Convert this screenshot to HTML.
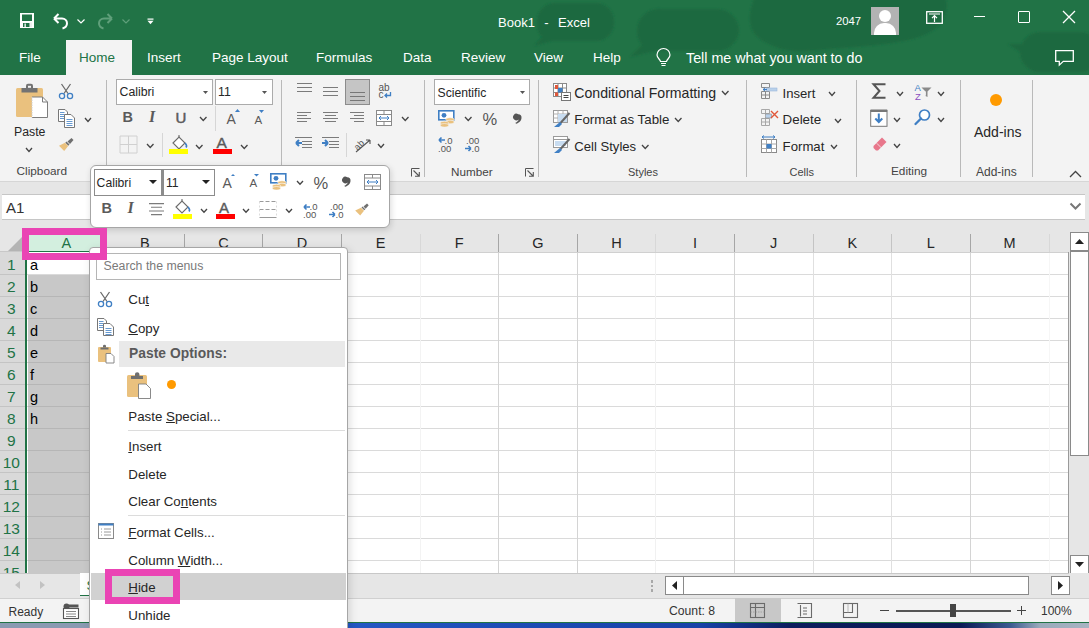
<!DOCTYPE html>
<html><head><meta charset="utf-8">
<style>
*{box-sizing:border-box;margin:0;padding:0}
html,body{width:1089px;height:628px;overflow:hidden;background:#e6e6e6;font-family:"Liberation Sans",sans-serif;color:#262626}
.a{position:absolute}
svg.a{overflow:visible}
.t{position:absolute;white-space:nowrap;line-height:1}
#title{left:0;top:0;width:1089px;height:75px;background:#217346;overflow:hidden}
.tab{position:absolute;top:51px;font-size:13.5px;color:#fff}
</style></head><body>
<!-- TITLE BAR + TABS -->
<div id="title" class="a">
 <svg class="a" style="left:0;top:0" width="1089" height="75" viewBox="0 0 1089 75"><g fill="#1f6940" filter="url(#bl)">
 <path d="M556 3h40a18 18 0 0 1 18 18v2a18 18 0 0 1-18 18h-44l-18 5l8-9a18 18 0 0 1-5-14v-2a18 18 0 0 1 19-18z"/>
 <path d="M662 9h55a22 22 0 0 1 22 22a22 22 0 0 1-22 20h-62l-25 6l12-12a22 22 0 0 1-5-14a22 22 0 0 1 25-22z"/>
 <path d="M755 -5h185c10 0 8 20 0 30c-20 20-70 20-120 25c-30 3-40 0-55-8c-15-8-20-20-10-47z"/>
 <path d="M1040 32h40a20 20 0 0 1 20 20a20 20 0 0 1-20 20h-40a20 20 0 0 1-20-20l-12-8l14 0a20 20 0 0 1 18-12z"/>
</g><defs><filter id="bl"><feGaussianBlur stdDeviation="1.2"/></filter></defs></svg>
 <!-- save -->
 <svg class="a" style="left:20px;top:13px" width="14" height="15" viewBox="0 0 14 15"><rect width="14" height="15" fill="#fff"/><rect x="2" y="1.5" width="10" height="6.5" fill="#217346"/><rect x="3" y="10" width="6.5" height="4" fill="#217346"/><rect x="4.5" y="10.5" width="1.3" height="3.5" fill="#fff"/><rect x="10" y="9.5" width="2" height="4.5" fill="#eee"/></svg>
 <!-- undo -->
 <svg class="a" style="left:52px;top:12px" width="18" height="18" viewBox="0 0 18 18"><path d="M2 6.5l4.5-4.5M2 6.5l4.5 4.5M2.5 6.5h7.5c3 0 5 2.2 5 4.8c0 2.6-1.8 4.5-4.5 5.2" fill="none" stroke="#fff" stroke-width="2"/></svg>
 <svg class="a" style="left:77px;top:19px" width="8" height="5" viewBox="0 0 8 5"><path d="M.5.5l3.5 3.5l3.5-3.5" fill="none" stroke="#fff" stroke-width="1.2"/></svg>
 <!-- redo -->
 <svg class="a" style="left:96px;top:12px" width="18" height="18" viewBox="0 0 18 18"><path d="M16 6.5l-4.5-4.5M16 6.5l-4.5 4.5M15.5 6.5h-7.5c-3 0-5 2.2-5 4.8c0 2.6 1.8 4.5 4.5 5.2" fill="none" stroke="#5f9f7a" stroke-width="2"/></svg>
 <svg class="a" style="left:122px;top:19px" width="8" height="5" viewBox="0 0 8 5"><path d="M.5.5l3.5 3.5l3.5-3.5" fill="none" stroke="#5f9f7a" stroke-width="1.2"/></svg>
 <!-- customize -->
 <svg class="a" style="left:147px;top:18px" width="7" height="7" viewBox="0 0 7 7"><rect x="0.5" y="0.5" width="6" height="1.2" fill="#fff"/><path d="M0.5 2.8h6l-3 3.5z" fill="#fff"/></svg>
 <div class="t" style="left:498px;top:15.5px;font-size:13px;color:#fff;word-spacing:1.1px">Book1&nbsp; -&nbsp; Excel</div>
 <div class="t" style="left:836px;top:16px;font-size:11.3px;color:#fff">2047</div>
 <div class="a" style="left:871px;top:7px;width:28px;height:28px;background:#b3b3b3;overflow:hidden">
  <div class="a" style="left:8px;top:3px;width:12px;height:12px;border-radius:50%;background:#fff"></div>
  <div class="a" style="left:3px;top:16px;width:22px;height:16px;border-radius:10px 10px 0 0;background:#fff"></div>
 </div>
 <svg class="a" style="left:926px;top:11px" width="17" height="13" viewBox="0 0 17 13"><rect x="0.7" y="0.7" width="15.6" height="11.6" fill="none" stroke="#fff" stroke-width="1.3"/><path d="M3 3h11M8.5 11V5M6 7.2l2.5-2.5l2.5 2.5" fill="none" stroke="#fff" stroke-width="1.2"/></svg>
 <div class="a" style="left:974px;top:16px;width:11px;height:1.3px;background:#fff"></div>
 <div class="a" style="left:1018px;top:11px;width:12px;height:12px;border:1.3px solid #fff;border-radius:1px"></div>
 <svg class="a" style="left:1062px;top:10px" width="14" height="14" viewBox="0 0 14 14"><path d="M1 1l12 12M13 1l-12 12" stroke="#fff" stroke-width="1.3"/></svg>
 <!-- tabs -->
 <div class="a" style="left:66px;top:40px;width:66px;height:35px;background:#f3f3f3"></div>
 <div class="tab t" style="left:19px">File</div>
 <div class="tab t" style="left:79px;color:#217346">Home</div>
 <div class="tab t" style="left:147px">Insert</div>
 <div class="tab t" style="left:212px">Page Layout</div>
 <div class="tab t" style="left:316px">Formulas</div>
 <div class="tab t" style="left:403px">Data</div>
 <div class="tab t" style="left:461px">Review</div>
 <div class="tab t" style="left:534px">View</div>
 <div class="tab t" style="left:593px">Help</div>
 <svg class="a" style="left:656px;top:49px" width="15" height="19" viewBox="0 0 15 19"><path d="M4.5 12.5c-.3-2-3.5-3.6-3.5-6.5a6.5 6.5 0 0 1 13 0c0 2.9-3.2 4.5-3.5 6.5z" fill="none" stroke="#fff" stroke-width="1.2"/><path d="M5 14.5h5M5.5 16.5h4" stroke="#fff" stroke-width="1.2"/></svg>
 <div class="tab t" style="left:686px;font-size:14.3px">Tell me what you want to do</div>
 <svg class="a" style="left:1055px;top:50px" width="19" height="16" viewBox="0 0 19 16"><path d="M.7.7h17.6v10.6h-10l-4 3.8v-3.8h-3.6z" fill="none" stroke="#fff" stroke-width="1.3"/></svg>
</div>

<div class="a" style="left:0px;top:75px;width:1089px;height:107px;background:#f3f3f3"></div><div class="a" style="left:0px;top:181px;width:1089px;height:1.2px;background:#d6d6d6"></div><div class="a" style="left:106px;top:80px;width:1px;height:97px;background:#b9b9b9"></div><div class="a" style="left:281px;top:80px;width:1px;height:97px;background:#b9b9b9"></div><div class="a" style="left:424px;top:80px;width:1px;height:97px;background:#b9b9b9"></div><div class="a" style="left:538px;top:80px;width:1px;height:97px;background:#b9b9b9"></div><div class="a" style="left:746px;top:80px;width:1px;height:97px;background:#b9b9b9"></div><div class="a" style="left:856px;top:80px;width:1px;height:97px;background:#b9b9b9"></div><div class="a" style="left:960px;top:80px;width:1px;height:97px;background:#b9b9b9"></div><div class="a" style="left:1032px;top:80px;width:1px;height:97px;background:#b9b9b9"></div><div class="a" style="left:215px;top:106px;width:1px;height:25px;background:#d6d6d6"></div><div class="a" style="left:162px;top:133px;width:1px;height:24px;background:#d6d6d6"></div><div class="a" style="left:346px;top:133px;width:1px;height:24px;background:#d6d6d6"></div><div class="t" style="left:16.5px;top:166.3px;font-size:11.8px;color:#444;">Clipboard</div><div class="t" style="left:451.0px;top:166.4px;font-size:11.7px;color:#444;">Number</div><div class="t" style="left:628.0px;top:167.0px;font-size:11px;color:#444;">Styles</div><div class="t" style="left:789.5px;top:167.0px;font-size:11px;color:#444;">Cells</div><div class="t" style="left:891.0px;top:166.3px;font-size:11.8px;color:#444;">Editing</div><div class="t" style="left:976.0px;top:166.1px;font-size:12px;color:#444;">Add-ins</div><svg class="a" style="left:411px;top:168px" width="9" height="9" viewBox="0 0 9 9"><path d="M.5 8.5v-8h8" fill="none" stroke="#555" stroke-width="1"/><path d="M2.5 2.5l5.5 5.5M4 8.3h4.3v-4.3" fill="none" stroke="#555" stroke-width="1.1"/></svg><svg class="a" style="left:525px;top:168px" width="9" height="9" viewBox="0 0 9 9"><path d="M.5 8.5v-8h8" fill="none" stroke="#555" stroke-width="1"/><path d="M2.5 2.5l5.5 5.5M4 8.3h4.3v-4.3" fill="none" stroke="#555" stroke-width="1.1"/></svg><svg class="a" style="left:1069px;top:170px" width="13" height="8" viewBox="0 0 13 8"><path d="M1 7l5.5-5.5l5.5 5.5" fill="none" stroke="#444" stroke-width="1.3"/></svg><svg class="a" style="left:14px;top:83px" width="36" height="37" viewBox="0 0 36 37"><rect x="2" y="5" width="27" height="29" rx="1.5" fill="#eac17e"/>
<path d="M7.5 5h16v4.5h-16z" fill="#737373"/><path d="M12 6v-3.2a2 2 0 0 1 2-2h3a2 2 0 0 1 2 2v3.2z" fill="#737373"/><rect x="14" y="2.8" width="3" height="2" fill="#f3f3f3"/>
<path d="M18 14h10.5l5 5v15.5h-15.5z" fill="#fff"/><path d="M18 14h10.5l5 5v15.5h-15.5" fill="none" stroke="#7d7d7d" stroke-width="1"/><path d="M18 14v20.5" stroke="#cfcfcf" stroke-width="1" stroke-dasharray="1.5 1"/><path d="M28.5 14v5h5" fill="none" stroke="#7d7d7d" stroke-width="1"/></svg><div class="t" style="left:14.0px;top:125.5px;font-size:12.3px;color:#262626;">Paste</div><svg class="a" style="left:25px;top:147px" width="8" height="5.5" viewBox="0 0 8 5.5"><path d="M1 1l3.0 3.5l3.0 -3.5" fill="none" stroke="#444" stroke-width="1.3"/></svg><svg class="a" style="left:58px;top:83px" width="16" height="17" viewBox="0 0 16 17"><path d="M3.5 1l6.5 9.5M12.5 1l-6.5 9.5" stroke="#6b6b6b" stroke-width="1.3"/><circle cx="4" cy="13" r="2.6" fill="none" stroke="#3f7fc4" stroke-width="1.3"/><circle cx="12" cy="13" r="2.6" fill="none" stroke="#3f7fc4" stroke-width="1.3"/></svg><svg class="a" style="left:58px;top:109px" width="17" height="19" viewBox="0 0 17 19"><path d="M.5 .5h6.5l2.5 2.5v9.5h-9z" fill="#fff" stroke="#777" stroke-width="1"/>
<path d="M2 3.5h4.5M2 5.5h4.5M2 7.5h4.5M2 9.5h4.5" stroke="#3f7fc4" stroke-width=".8"/>
<path d="M6.5 5.5h6.5l3.5 3.5v9.5h-10z" fill="#fff" stroke="#777" stroke-width="1"/>
<path d="M8.5 10.5h6M8.5 12.5h6M8.5 14.5h6M8.5 16.5h6" stroke="#3f7fc4" stroke-width=".8"/></svg><svg class="a" style="left:83.5px;top:116.5px" width="8" height="5.5" viewBox="0 0 8 5.5"><path d="M1 1l3.0 3.5l3.0 -3.5" fill="none" stroke="#444" stroke-width="1.3"/></svg><svg class="a" style="left:58px;top:137px" width="17" height="15" viewBox="0 0 17 15"><path d="M9.5 4.5l4-3.5l2 2l-3.5 4z" fill="#6f6f6f"/><path d="M8.5 4.5l3 3l-1.2 1.2l-3-3z" fill="#6f6f6f"/><path d="M7 5.8l3.2 3.2l-4 5l-5.2-5.2z" fill="#eac17e"/></svg><div class="a" style="left:116px;top:79px;width:97px;height:26px;background:#fff;border:1px solid #ababab"></div><div class="t" style="left:119.5px;top:86.0px;font-size:12.3px;color:#262626;">Calibri</div><svg class="a" style="left:202.5px;top:91px" width="5" height="3" viewBox="0 0 5 3"><path d="M0 0h5l-2.5 3z" fill="#555"/></svg><div class="a" style="left:215px;top:79px;width:58px;height:26px;background:#fff;border:1px solid #ababab"></div><div class="t" style="left:218.0px;top:86.0px;font-size:12.3px;color:#262626;">11</div><svg class="a" style="left:262px;top:91px" width="5" height="3" viewBox="0 0 5 3"><path d="M0 0h5l-2.5 3z" fill="#555"/></svg><div class="t" style="left:122.5px;top:110.3px;font-size:14.5px;color:#5a5a5a;font-weight:bold">B</div><div class="t" style="left:149.0px;top:109.0px;font-size:16px;color:#5a5a5a;font-family:Liberation Serif;font-style:italic;font-weight:bold">I</div><div class="t" style="left:175.5px;top:109.8px;font-size:15px;color:#5a5a5a;-webkit-text-stroke:.5px #5a5a5a">U</div><svg class="a" style="left:198.5px;top:116px" width="8.5" height="5.5" viewBox="0 0 8.5 5.5"><path d="M1 1l3.25 3.5l3.25 -3.5" fill="none" stroke="#444" stroke-width="1.3"/></svg><div class="t" style="left:226.5px;top:112.4px;font-size:14px;color:#5a5a5a;">A</div><svg class="a" style="left:235px;top:109px" width="5" height="3" viewBox="0 0 5 3"><path d="M0 3l2.5-3l2.5 3z" fill="#3f7fc4"/></svg><div class="t" style="left:254.5px;top:114.5px;font-size:11.5px;color:#5a5a5a;">A</div><svg class="a" style="left:259px;top:110px" width="5" height="3" viewBox="0 0 5 3"><path d="M0 0h5l-2.5 3z" fill="#3f7fc4"/></svg><svg class="a" style="left:119px;top:135px" width="19" height="19" viewBox="0 0 19 19"><path d="M1 1h17v17h-17z M9.5 1v17 M1 9.5h17" fill="none" stroke="#d0d0d0" stroke-width="1"/></svg><svg class="a" style="left:145.5px;top:142.5px" width="8.5" height="5.5" viewBox="0 0 8.5 5.5"><path d="M1 1l3.25 3.5l3.25 -3.5" fill="none" stroke="#444" stroke-width="1.3"/></svg><svg class="a" style="left:169px;top:134px" width="20" height="21" viewBox="0 0 20 21"><path d="M4 9l6-6l6 6l-6 6z" fill="#fff" stroke="#6b6b6b" stroke-width="1.1"/><path d="M10 3v-2" stroke="#6b6b6b" stroke-width="1.1"/><path d="M16 9c1.5 1.5 1.8 3.5 1 4.5" fill="none" stroke="#3f7fc4" stroke-width="1.6"/><rect x="0" y="15" width="19" height="5" fill="#ffff00"/></svg><svg class="a" style="left:195px;top:143.5px" width="8.5" height="5.5" viewBox="0 0 8.5 5.5"><path d="M1 1l3.25 3.5l3.25 -3.5" fill="none" stroke="#444" stroke-width="1.3"/></svg><div class="t" style="left:216.5px;top:135.4px;font-size:15.5px;color:#5a5a5a;-webkit-text-stroke:.4px #5a5a5a">A</div><div class="a" style="left:213px;top:149px;width:19px;height:5px;background:#ff0000"></div><svg class="a" style="left:239.5px;top:143.5px" width="8.5" height="5.5" viewBox="0 0 8.5 5.5"><path d="M1 1l3.25 3.5l3.25 -3.5" fill="none" stroke="#444" stroke-width="1.3"/></svg><svg class="a" style="left:297px;top:83px" width="15" height="14" viewBox="0 0 15 14"><rect x="0" y="0" width="15" height="1" fill="#7b7b7b"/><rect x="0" y="4" width="15" height="1" fill="#7b7b7b"/><rect x="0" y="8" width="15" height="1" fill="#7b7b7b"/></svg><svg class="a" style="left:323px;top:87px" width="15" height="14" viewBox="0 0 15 14"><rect x="0" y="0" width="15" height="1" fill="#7b7b7b"/><rect x="0" y="4" width="15" height="1" fill="#7b7b7b"/><rect x="0" y="8" width="15" height="1" fill="#7b7b7b"/></svg><div class="a" style="left:345px;top:79px;width:25px;height:26px;background:#c5c5c5;border:1px solid #8c8c8c"></div><svg class="a" style="left:350px;top:92px" width="15" height="14" viewBox="0 0 15 14"><rect x="0" y="0" width="15" height="1" fill="#777"/><rect x="0" y="4" width="15" height="1" fill="#777"/><rect x="0" y="8" width="15" height="1" fill="#777"/></svg><div class="t" style="left:378.5px;top:82.5px;font-size:10px;color:#555;">ab</div><div class="t" style="left:378.5px;top:90.0px;font-size:10px;color:#555;">c</div><svg class="a" style="left:384px;top:92px" width="8" height="7" viewBox="0 0 8 7"><path d="M6.5 0v3.5h-5.5M3 1.5l-2 2l2 2" fill="none" stroke="#3f7fc4" stroke-width="1.3"/></svg><svg class="a" style="left:297px;top:112px" width="14" height="14" viewBox="0 0 14 14"><rect x="0" y="0" width="14" height="1" fill="#7b7b7b"/><rect x="0" y="3" width="10" height="1" fill="#7b7b7b"/><rect x="0" y="6" width="14" height="1" fill="#7b7b7b"/><rect x="0" y="9" width="10" height="1" fill="#7b7b7b"/></svg><svg class="a" style="left:323px;top:112px" width="17" height="14" viewBox="0 0 17 14"><rect x="0" y="0" width="15" height="1" fill="#7b7b7b"/><rect x="2" y="3" width="11" height="1" fill="#7b7b7b"/><rect x="0" y="6" width="15" height="1" fill="#7b7b7b"/><rect x="2" y="9" width="11" height="1" fill="#7b7b7b"/></svg><svg class="a" style="left:350px;top:112px" width="18" height="14" viewBox="0 0 18 14"><rect x="0" y="0" width="14" height="1" fill="#7b7b7b"/><rect x="4" y="3" width="10" height="1" fill="#7b7b7b"/><rect x="0" y="6" width="14" height="1" fill="#7b7b7b"/><rect x="4" y="9" width="10" height="1" fill="#7b7b7b"/></svg><svg class="a" style="left:376px;top:110px" width="16" height="16" viewBox="0 0 16 16"><rect x=".5" y=".5" width="15" height="15" fill="#fff" stroke="#8a8a8a"/><path d="M.5 4.5h15M.5 11.5h15M8 .5v4M8 11.5v4" stroke="#8a8a8a"/><path d="M3 8h10M5 6l-2 2l2 2M11 6l2 2l-2 2" fill="none" stroke="#3f7fc4" stroke-width="1"/></svg><svg class="a" style="left:401px;top:116px" width="8.5" height="5.5" viewBox="0 0 8.5 5.5"><path d="M1 1l3.25 3.5l3.25 -3.5" fill="none" stroke="#444" stroke-width="1.3"/></svg><svg class="a" style="left:295px;top:137px" width="18" height="12" viewBox="0 0 18 12"><path d="M0 .5h17M7 4.5h10M7 7.5h10M7 10.5h10" stroke="#7b7b7b" stroke-width="1"/><path d="M1 6h6M1 6l3-3M1 6l3 3" fill="none" stroke="#3f7fc4" stroke-width="2"/></svg><svg class="a" style="left:322px;top:137px" width="18" height="12" viewBox="0 0 18 12"><path d="M0 .5h17M7 4.5h10M7 7.5h10M7 10.5h10" stroke="#7b7b7b" stroke-width="1"/><path d="M0 6h6M6 6l-3-3M6 6l-3 3" fill="none" stroke="#3f7fc4" stroke-width="2"/></svg><svg class="a" style="left:354px;top:136px" width="18" height="17" viewBox="0 0 18 17"><text x="0" y="12" font-family="Liberation Sans" font-size="9" fill="#555" transform="rotate(-45 5 9)">ab</text><path d="M2 16l14-12M16 4h-4M16 4v4" fill="none" stroke="#555" stroke-width="1.1"/></svg><svg class="a" style="left:377px;top:142.5px" width="8" height="5.5" viewBox="0 0 8 5.5"><path d="M1 1l3.0 3.5l3.0 -3.5" fill="none" stroke="#444" stroke-width="1.3"/></svg><div class="a" style="left:434px;top:79px;width:96px;height:26px;background:#fff;border:1px solid #ababab"></div><div class="t" style="left:437.5px;top:86.5px;font-size:12.2px;color:#262626;">Scientific</div><svg class="a" style="left:520px;top:91px" width="5" height="3" viewBox="0 0 5 3"><path d="M0 0h5l-2.5 3z" fill="#555"/></svg><svg class="a" style="left:438px;top:110px" width="18" height="17" viewBox="0 0 18 17"><rect x=".8" y=".8" width="15" height="9" fill="#fff" stroke="#3f7fc4" stroke-width="1.6"/><circle cx="6" cy="5.3" r="2.4" fill="#3f7fc4"/><ellipse cx="12" cy="9.5" rx="4.2" ry="1.8" fill="#eac17e" stroke="#f3f3f3" stroke-width=".6"/><ellipse cx="12" cy="12" rx="4.2" ry="1.8" fill="#eac17e" stroke="#f3f3f3" stroke-width=".6"/><ellipse cx="6.5" cy="13" rx="4.2" ry="1.8" fill="#eac17e" stroke="#f3f3f3" stroke-width=".6"/><ellipse cx="6.5" cy="15.3" rx="4.2" ry="1.8" fill="#eac17e" stroke="#f3f3f3" stroke-width=".6"/></svg><svg class="a" style="left:463.5px;top:116px" width="8.5" height="5.5" viewBox="0 0 8.5 5.5"><path d="M1 1l3.25 3.5l3.25 -3.5" fill="none" stroke="#444" stroke-width="1.3"/></svg><div class="t" style="left:482.5px;top:110.9px;font-size:16.5px;color:#555;">%</div><svg class="a" style="left:513.5px;top:113.5px" width="8" height="10" viewBox="0 0 8 10"><path d="M4.2 0.3a3.3 3.3 0 0 1 3.3 3.5c0 2.8-2.3 5.2-5.5 6l-.6-1.1c1.8-.8 3-2 3.3-3.3a3.3 3.3 0 1 1-.5-5.1z" fill="#555"/></svg><svg class="a" style="left:438px;top:135px" width="18" height="18" viewBox="0 0 18 18"><path d="M1 5h6M1 5l2.5-2.5M1 5l2.5 2.5" fill="none" stroke="#3f7fc4" stroke-width="1.6"/><text x="6.5" y="8.5" font-family="Liberation Sans" font-size="9.5" fill="#555">.0</text><text x="0" y="17" font-family="Liberation Sans" font-size="9.5" fill="#555">.00</text></svg><svg class="a" style="left:464px;top:135px" width="18" height="18" viewBox="0 0 18 18"><text x="2" y="8.5" font-family="Liberation Sans" font-size="9.5" fill="#555">.00</text><path d="M1 13.5h6M7 13.5l-2.5-2.5M7 13.5l-2.5 2.5" fill="none" stroke="#3f7fc4" stroke-width="1.6"/><text x="7.5" y="17" font-family="Liberation Sans" font-size="9.5" fill="#555">.0</text></svg><svg class="a" style="left:553px;top:83px" width="18" height="18" viewBox="0 0 18 18"><rect x=".5" y=".5" width="13" height="13" fill="#fff" stroke="#8a8a8a"/><path d="M.5 5h13M.5 9.5h13M5 .5v13M9.5 .5v13" stroke="#8a8a8a"/><rect x="2" y="2" width="3" height="4" fill="#e0573a"/><rect x="5" y="5" width="4.5" height="4.5" fill="#3f7fc4"/><rect x="2" y="9.5" width="3" height="3.5" fill="#e0573a"/><rect x="8.5" y="9.5" width="9" height="8" fill="#fff" stroke="#777"/><path d="M10.5 12.5h5M10.5 14.5h5" stroke="#444"/></svg><div class="t" style="left:574.3px;top:85.6px;font-size:14.1px;color:#262626;">Conditional Formatting</div><svg class="a" style="left:720.5px;top:90px" width="8.5" height="5.5" viewBox="0 0 8.5 5.5"><path d="M1 1l3.25 3.5l3.25 -3.5" fill="none" stroke="#444" stroke-width="1.3"/></svg><svg class="a" style="left:553px;top:110px" width="18" height="18" viewBox="0 0 18 18"><rect x=".5" y=".5" width="14" height="12" fill="#fff" stroke="#9a9a9a"/><path d="M.5 4h14M5 .5v12M10 .5v12M.5 8h14" stroke="#b0b0b0"/><rect x="5" y="4" width="9" height="8" fill="#c8dcf0"/><path d="M16.5 3l-9 10" stroke="#666" stroke-width="2"/><path d="M7 12l2 2l-3 3l-5 0z" fill="#3f7fc4"/></svg><div class="t" style="left:574.3px;top:112.6px;font-size:13.3px;color:#262626;">Format as Table</div><svg class="a" style="left:674px;top:116.5px" width="8.5" height="5.5" viewBox="0 0 8.5 5.5"><path d="M1 1l3.25 3.5l3.25 -3.5" fill="none" stroke="#444" stroke-width="1.3"/></svg><svg class="a" style="left:553px;top:136px" width="18" height="18" viewBox="0 0 18 18"><rect x=".5" y=".5" width="14" height="11" fill="#fff" stroke="#9a9a9a"/><path d="M.5 3.5h14" stroke="#9a9a9a"/><rect x="2" y="5" width="11" height="5" fill="#c8dcf0"/><path d="M16.5 3l-9 10" stroke="#666" stroke-width="2"/><path d="M7 12l2 2l-3 3l-5 0z" fill="#3f7fc4"/></svg><div class="t" style="left:574.3px;top:139.7px;font-size:13.1px;color:#262626;">Cell Styles</div><svg class="a" style="left:640.5px;top:143.5px" width="8.5" height="5.5" viewBox="0 0 8.5 5.5"><path d="M1 1l3.25 3.5l3.25 -3.5" fill="none" stroke="#444" stroke-width="1.3"/></svg><svg class="a" style="left:761px;top:83px" width="17" height="17" viewBox="0 0 17 17"><path d="M.5 .5h8v4h-8z M.5 8.5h8v7h-8z M.5 12h8 M4.5 8.5v7" fill="none" stroke="#8a8a8a"/><rect x="5" y="5" width="11" height="3" fill="#b9d1ea" stroke="#9cb9dc" stroke-width=".6"/><path d="M2 6.5h4M2 6.5l2-1.5M2 6.5l2 1.5" fill="none" stroke="#3f7fc4" stroke-width="1"/></svg><div class="t" style="left:782.6px;top:86.9px;font-size:13.1px;color:#262626;">Insert</div><svg class="a" style="left:827.5px;top:91px" width="8" height="5.5" viewBox="0 0 8 5.5"><path d="M1 1l3.0 3.5l3.0 -3.5" fill="none" stroke="#444" stroke-width="1.3"/></svg><svg class="a" style="left:761px;top:109px" width="18" height="17" viewBox="0 0 18 17"><path d="M.5 .5h8v4h-8z M.5 9.5h8v7h-8z M.5 13h8 M4.5 9.5v7 M4.5 .5v4" fill="none" stroke="#a8a8a8"/><rect x="4.5" y="5" width="6" height="4" fill="#b9d1ea" stroke="#8a8a8a" stroke-width=".6"/><path d="M10 2l7 7M17 2l-7 7" stroke="#e0573a" stroke-width="1.4"/></svg><div class="t" style="left:782.6px;top:112.9px;font-size:13.35px;color:#262626;">Delete</div><svg class="a" style="left:834px;top:117.5px" width="8" height="5.5" viewBox="0 0 8 5.5"><path d="M1 1l3.0 3.5l3.0 -3.5" fill="none" stroke="#444" stroke-width="1.3"/></svg><svg class="a" style="left:761px;top:135px" width="17" height="19" viewBox="0 0 17 19"><path d="M1 2h13M1 2l2-1.5M1 2l2 1.5M14 2l-2-1.5M14 2l-2 1.5" fill="none" stroke="#3f7fc4" stroke-width="1"/><rect x=".5" y="4.5" width="15" height="13" fill="#fff" stroke="#8a8a8a"/><path d="M.5 9h15M.5 13.5h15M5.5 4.5v13M10.5 4.5v13" stroke="#a8a8a8"/><rect x="5.5" y="9" width="5" height="4.5" fill="#3f7fc4"/></svg><div class="t" style="left:782.6px;top:139.5px;font-size:13.2px;color:#262626;">Format</div><svg class="a" style="left:829.5px;top:143.5px" width="8" height="5.5" viewBox="0 0 8 5.5"><path d="M1 1l3.0 3.5l3.0 -3.5" fill="none" stroke="#444" stroke-width="1.3"/></svg><svg class="a" style="left:872px;top:83px" width="15" height="16" viewBox="0 0 15 16"><path d="M13.5 1.2h-12l6 6.8l-6 6.8h12" fill="none" stroke="#555" stroke-width="2"/></svg><svg class="a" style="left:896px;top:91px" width="8" height="5.5" viewBox="0 0 8 5.5"><path d="M1 1l3.0 3.5l3.0 -3.5" fill="none" stroke="#444" stroke-width="1.3"/></svg><svg class="a" style="left:914px;top:83px" width="18" height="17" viewBox="0 0 18 17"><text x="0.5" y="8" font-family="Liberation Sans" font-size="9.5" fill="#3f7fc4">A</text><text x="1" y="16.5" font-family="Liberation Sans" font-size="9.5" fill="#8a4fbf">Z</text><path d="M7.5 4.5h10l-4 4v5.5l-2-1v-4.5z" fill="#8a8a8a"/><path d="M11.5 8.5v4" stroke="#f3f3f3" stroke-width=".8"/></svg><svg class="a" style="left:937px;top:91px" width="8" height="5.5" viewBox="0 0 8 5.5"><path d="M1 1l3.0 3.5l3.0 -3.5" fill="none" stroke="#444" stroke-width="1.3"/></svg><svg class="a" style="left:870px;top:109px" width="18" height="18" viewBox="0 0 18 18"><rect x=".7" y="1.5" width="16.3" height="15.8" fill="#fff" stroke="#777" stroke-width="1"/><rect x=".5" y=".5" width="16.7" height="2.5" fill="#777"/><path d="M8.8 4.5v8M5.3 9.5l3.5 3.5l3.5-3.5" fill="none" stroke="#3f7fc4" stroke-width="2"/></svg><svg class="a" style="left:893px;top:116.5px" width="8" height="5.5" viewBox="0 0 8 5.5"><path d="M1 1l3.0 3.5l3.0 -3.5" fill="none" stroke="#444" stroke-width="1.3"/></svg><svg class="a" style="left:914px;top:109px" width="17" height="17" viewBox="0 0 17 17"><circle cx="10.5" cy="6" r="5" fill="#fff" stroke="#3f7fc4" stroke-width="1.7"/><path d="M7 9.5l-5.5 5.5" stroke="#3f7fc4" stroke-width="2.3" stroke-linecap="round"/></svg><svg class="a" style="left:937px;top:116.5px" width="8" height="5.5" viewBox="0 0 8 5.5"><path d="M1 1l3.0 3.5l3.0 -3.5" fill="none" stroke="#444" stroke-width="1.3"/></svg><svg class="a" style="left:873px;top:137px" width="14" height="15" viewBox="0 0 14 15"><path d="M9 .5l4.5 4.5l-8.5 8.5h-2l-2.5-2.5v-2z" fill="#e8778b"/><path d="M3.8 6.3l4.5 4.5" stroke="#f3f3f3" stroke-width=".8"/></svg><svg class="a" style="left:893px;top:143px" width="8" height="5.5" viewBox="0 0 8 5.5"><path d="M1 1l3.0 3.5l3.0 -3.5" fill="none" stroke="#444" stroke-width="1.3"/></svg><div class="a" style="left:990px;top:93.5px;width:12px;height:12px;background:#ff9a00;border-radius:50%"></div><div class="t" style="left:974.0px;top:125.3px;font-size:14px;color:#262626;">Add-ins</div><div class="a" style="left:0px;top:182px;width:1089px;height:12px;background:#e6e6e6"></div><div class="a" style="left:2px;top:194px;width:1083px;height:26px;background:#fff;border-top:1px solid #c6c6c6;border-bottom:1px solid #c6c6c6"></div><div class="t" style="left:6.0px;top:200.1px;font-size:15px;color:#333;">A1</div><svg class="a" style="left:1069px;top:202px" width="13" height="8" viewBox="0 0 13 8"><path d="M1.5 1.5l5 5l5-5" fill="none" stroke="#777" stroke-width="2"/></svg><div class="a" style="left:0px;top:220px;width:1089px;height:11px;background:#e6e6e6"></div><div class="a" style="left:0px;top:231px;width:1069px;height:21px;background:#e6e6e6"></div><div class="a" style="left:0px;top:252px;width:27px;height:321px;background:#d9d9d9"></div><div class="a" style="left:27px;top:252px;width:1042px;height:321px;background:#fff"></div><div class="a" style="left:28px;top:252px;width:62px;height:321px;background:#c8c8c8"></div><div class="a" style="left:27px;top:252px;width:63px;height:22px;background:#fff"></div><div class="a" style="left:27px;top:231px;width:79px;height:21px;background:#d3efdf"></div><div class="a" style="left:27px;top:251px;width:79px;height:1px;background:#217346"></div><div class="a" style="left:27px;top:274px;width:1042px;height:1px;background:#dadada"></div><div class="a" style="left:0px;top:274px;width:25px;height:1px;background:#c4c4c4"></div><div class="a" style="left:27px;top:296px;width:1042px;height:1px;background:#dadada"></div><div class="a" style="left:0px;top:296px;width:25px;height:1px;background:#c4c4c4"></div><div class="a" style="left:27px;top:318px;width:1042px;height:1px;background:#dadada"></div><div class="a" style="left:0px;top:318px;width:25px;height:1px;background:#c4c4c4"></div><div class="a" style="left:27px;top:340px;width:1042px;height:1px;background:#dadada"></div><div class="a" style="left:0px;top:340px;width:25px;height:1px;background:#c4c4c4"></div><div class="a" style="left:27px;top:362px;width:1042px;height:1px;background:#dadada"></div><div class="a" style="left:0px;top:362px;width:25px;height:1px;background:#c4c4c4"></div><div class="a" style="left:27px;top:384px;width:1042px;height:1px;background:#dadada"></div><div class="a" style="left:0px;top:384px;width:25px;height:1px;background:#c4c4c4"></div><div class="a" style="left:27px;top:406px;width:1042px;height:1px;background:#dadada"></div><div class="a" style="left:0px;top:406px;width:25px;height:1px;background:#c4c4c4"></div><div class="a" style="left:27px;top:428px;width:1042px;height:1px;background:#dadada"></div><div class="a" style="left:0px;top:428px;width:25px;height:1px;background:#c4c4c4"></div><div class="a" style="left:27px;top:450px;width:1042px;height:1px;background:#dadada"></div><div class="a" style="left:0px;top:450px;width:25px;height:1px;background:#c4c4c4"></div><div class="a" style="left:27px;top:472px;width:1042px;height:1px;background:#dadada"></div><div class="a" style="left:0px;top:472px;width:25px;height:1px;background:#c4c4c4"></div><div class="a" style="left:27px;top:494px;width:1042px;height:1px;background:#dadada"></div><div class="a" style="left:0px;top:494px;width:25px;height:1px;background:#c4c4c4"></div><div class="a" style="left:27px;top:516px;width:1042px;height:1px;background:#dadada"></div><div class="a" style="left:0px;top:516px;width:25px;height:1px;background:#c4c4c4"></div><div class="a" style="left:27px;top:538px;width:1042px;height:1px;background:#dadada"></div><div class="a" style="left:0px;top:538px;width:25px;height:1px;background:#c4c4c4"></div><div class="a" style="left:27px;top:560px;width:1042px;height:1px;background:#dadada"></div><div class="a" style="left:0px;top:560px;width:25px;height:1px;background:#c4c4c4"></div><div class="a" style="left:105px;top:252px;width:1px;height:321px;background:#d4d4d4"></div><div class="a" style="left:105px;top:234px;width:1px;height:18px;background:#a6a6a6"></div><div class="a" style="left:184px;top:252px;width:1px;height:321px;background:#d4d4d4"></div><div class="a" style="left:184px;top:234px;width:1px;height:18px;background:#a6a6a6"></div><div class="a" style="left:262px;top:252px;width:1px;height:321px;background:#d4d4d4"></div><div class="a" style="left:262px;top:234px;width:1px;height:18px;background:#a6a6a6"></div><div class="a" style="left:341px;top:252px;width:1px;height:321px;background:#d4d4d4"></div><div class="a" style="left:341px;top:234px;width:1px;height:18px;background:#a6a6a6"></div><div class="a" style="left:420px;top:252px;width:1px;height:321px;background:#f3f3f3"></div><div class="a" style="left:420px;top:234px;width:1px;height:18px;background:#d8d8d8"></div><div class="a" style="left:498px;top:252px;width:1px;height:321px;background:#d4d4d4"></div><div class="a" style="left:498px;top:234px;width:1px;height:18px;background:#a6a6a6"></div><div class="a" style="left:577px;top:252px;width:1px;height:321px;background:#d4d4d4"></div><div class="a" style="left:577px;top:234px;width:1px;height:18px;background:#a6a6a6"></div><div class="a" style="left:655px;top:252px;width:1px;height:321px;background:#f1f1f1"></div><div class="a" style="left:655px;top:234px;width:1px;height:18px;background:#d8d8d8"></div><div class="a" style="left:734px;top:252px;width:1px;height:321px;background:#d4d4d4"></div><div class="a" style="left:734px;top:234px;width:1px;height:18px;background:#a6a6a6"></div><div class="a" style="left:813px;top:252px;width:1px;height:321px;background:#e0e0e0"></div><div class="a" style="left:813px;top:234px;width:1px;height:18px;background:#c4c4c4"></div><div class="a" style="left:891px;top:252px;width:1px;height:321px;background:#e0e0e0"></div><div class="a" style="left:891px;top:234px;width:1px;height:18px;background:#c4c4c4"></div><div class="a" style="left:970px;top:252px;width:1px;height:321px;background:#d4d4d4"></div><div class="a" style="left:970px;top:234px;width:1px;height:18px;background:#a6a6a6"></div><div class="a" style="left:1049px;top:252px;width:1px;height:321px;background:#f6f6f6"></div><div class="a" style="left:1049px;top:234px;width:1px;height:18px;background:#d8d8d8"></div><div class="a" style="left:0px;top:251px;width:27px;height:1px;background:#c8c8c8"></div><div class="a" style="left:106px;top:252px;width:963px;height:1px;background:#d0d0d0"></div><div class="a" style="left:28px;top:274px;width:62px;height:1px;background:#b6b6b6"></div><div class="a" style="left:28px;top:296px;width:62px;height:1px;background:#b6b6b6"></div><div class="a" style="left:28px;top:318px;width:62px;height:1px;background:#b6b6b6"></div><div class="a" style="left:28px;top:340px;width:62px;height:1px;background:#b6b6b6"></div><div class="a" style="left:28px;top:362px;width:62px;height:1px;background:#b6b6b6"></div><div class="a" style="left:28px;top:384px;width:62px;height:1px;background:#b6b6b6"></div><div class="a" style="left:28px;top:406px;width:62px;height:1px;background:#b6b6b6"></div><div class="a" style="left:28px;top:428px;width:62px;height:1px;background:#b6b6b6"></div><div class="a" style="left:28px;top:450px;width:62px;height:1px;background:#b6b6b6"></div><div class="a" style="left:28px;top:472px;width:62px;height:1px;background:#b6b6b6"></div><div class="a" style="left:28px;top:494px;width:62px;height:1px;background:#b6b6b6"></div><div class="a" style="left:28px;top:516px;width:62px;height:1px;background:#b6b6b6"></div><div class="a" style="left:28px;top:538px;width:62px;height:1px;background:#b6b6b6"></div><div class="a" style="left:28px;top:560px;width:62px;height:1px;background:#b6b6b6"></div><div class="a" style="left:27px;top:252px;width:63px;height:22px;background:#fff"></div><div class="a" style="left:27px;top:274px;width:63px;height:1px;background:#dadada"></div><div class="a" style="left:25px;top:252px;width:2px;height:321px;background:#217346"></div><div class="a" style="left:1068px;top:252px;width:1px;height:321px;background:#9a9a9a"></div><svg class="a" style="left:8px;top:236px" width="15" height="15" viewBox="0 0 15 15"><path d="M0 15L15 0V15z" fill="#b4b4b4"/></svg><div class="t" style="left:46.3px;width:40px;text-align:center;top:236.2px;font-size:14.5px;color:#217346">A</div><div class="t" style="left:124.9px;width:40px;text-align:center;top:236.2px;font-size:14.5px;color:#262626">B</div><div class="t" style="left:203.5px;width:40px;text-align:center;top:236.2px;font-size:14.5px;color:#262626">C</div><div class="t" style="left:282.1px;width:40px;text-align:center;top:236.2px;font-size:14.5px;color:#262626">D</div><div class="t" style="left:360.7px;width:40px;text-align:center;top:236.2px;font-size:14.5px;color:#262626">E</div><div class="t" style="left:439.3px;width:40px;text-align:center;top:236.2px;font-size:14.5px;color:#262626">F</div><div class="t" style="left:517.9px;width:40px;text-align:center;top:236.2px;font-size:14.5px;color:#262626">G</div><div class="t" style="left:596.5px;width:40px;text-align:center;top:236.2px;font-size:14.5px;color:#262626">H</div><div class="t" style="left:675.1px;width:40px;text-align:center;top:236.2px;font-size:14.5px;color:#262626">I</div><div class="t" style="left:753.7px;width:40px;text-align:center;top:236.2px;font-size:14.5px;color:#262626">J</div><div class="t" style="left:832.3px;width:40px;text-align:center;top:236.2px;font-size:14.5px;color:#262626">K</div><div class="t" style="left:910.9px;width:40px;text-align:center;top:236.2px;font-size:14.5px;color:#262626">L</div><div class="t" style="left:989.5px;width:40px;text-align:center;top:236.2px;font-size:14.5px;color:#262626">M</div><div class="t" style="left:0px;width:22.5px;text-align:center;top:256.5px;font-size:15.5px;color:#217346">1</div><div class="t" style="left:0px;width:22.5px;text-align:center;top:278.5px;font-size:15.5px;color:#217346">2</div><div class="t" style="left:0px;width:22.5px;text-align:center;top:300.5px;font-size:15.5px;color:#217346">3</div><div class="t" style="left:0px;width:22.5px;text-align:center;top:322.5px;font-size:15.5px;color:#217346">4</div><div class="t" style="left:0px;width:22.5px;text-align:center;top:344.5px;font-size:15.5px;color:#217346">5</div><div class="t" style="left:0px;width:22.5px;text-align:center;top:366.5px;font-size:15.5px;color:#217346">6</div><div class="t" style="left:0px;width:22.5px;text-align:center;top:388.5px;font-size:15.5px;color:#217346">7</div><div class="t" style="left:0px;width:22.5px;text-align:center;top:410.5px;font-size:15.5px;color:#217346">8</div><div class="t" style="left:0px;width:22.5px;text-align:center;top:432.5px;font-size:15.5px;color:#217346">9</div><div class="t" style="left:0px;width:22.5px;text-align:center;top:454.5px;font-size:15.5px;color:#217346">10</div><div class="t" style="left:0px;width:22.5px;text-align:center;top:476.5px;font-size:15.5px;color:#217346">11</div><div class="t" style="left:0px;width:22.5px;text-align:center;top:498.5px;font-size:15.5px;color:#217346">12</div><div class="t" style="left:0px;width:22.5px;text-align:center;top:520.5px;font-size:15.5px;color:#217346">13</div><div class="t" style="left:0px;width:22.5px;text-align:center;top:542.5px;font-size:15.5px;color:#217346">14</div><div class="t" style="left:0px;width:22.5px;text-align:center;top:564.5px;font-size:15.5px;color:#217346">15</div><div class="t" style="left:30.0px;top:257.6px;font-size:14.5px;color:#000;">a</div><div class="t" style="left:30.0px;top:279.6px;font-size:14.5px;color:#000;">b</div><div class="t" style="left:30.0px;top:301.6px;font-size:14.5px;color:#000;">c</div><div class="t" style="left:30.0px;top:323.6px;font-size:14.5px;color:#000;">d</div><div class="t" style="left:30.0px;top:345.6px;font-size:14.5px;color:#000;">e</div><div class="t" style="left:30.0px;top:367.6px;font-size:14.5px;color:#000;">f</div><div class="t" style="left:30.0px;top:389.6px;font-size:14.5px;color:#000;">g</div><div class="t" style="left:30.0px;top:411.6px;font-size:14.5px;color:#000;">h</div><div class="a" style="left:1069px;top:231px;width:20px;height:342px;background:#e6e6e6"></div><div class="a" style="left:1070px;top:232px;width:19px;height:19px;background:#fff;border:1.5px solid #8a8a8a"></div><svg class="a" style="left:1075px;top:238.5px" width="9" height="5" viewBox="0 0 9 5"><path d="M0 5L4.5 0L9 5z" fill="#222"/></svg><div class="a" style="left:1070px;top:251px;width:19px;height:205px;background:#fff;border:1.5px solid #8a8a8a"></div><div class="a" style="left:1070px;top:555px;width:19px;height:19px;background:#fff;border:1.5px solid #8a8a8a"></div><svg class="a" style="left:1075px;top:562px" width="9" height="5" viewBox="0 0 9 5"><path d="M0 0L9 0L4.5 5z" fill="#222"/></svg><div class="a" style="left:0px;top:573px;width:1089px;height:25px;background:#e6e6e6"></div><div class="a" style="left:0px;top:573px;width:1069px;height:1px;background:#c8c8c8"></div><svg class="a" style="left:15px;top:581px" width="5" height="8" viewBox="0 0 5 8"><path d="M5 0V8L0 4z" fill="#c2c2c2"/></svg><svg class="a" style="left:40px;top:581px" width="5" height="8" viewBox="0 0 5 8"><path d="M0 0V8L5 4z" fill="#c2c2c2"/></svg><div class="a" style="left:80px;top:573px;width:10px;height:23px;background:#fff"></div><div class="a" style="left:80px;top:595px;width:10px;height:1.3px;background:#217346"></div><div class="t" style="left:86.5px;top:578.5px;font-size:13.5px;color:#217346;">S</div><div class="a" style="left:651px;top:580.0px;width:2px;height:2.5px;background:#a8a8a8"></div><div class="a" style="left:651px;top:584.5px;width:2px;height:2.5px;background:#a8a8a8"></div><div class="a" style="left:651px;top:589.0px;width:2px;height:2.5px;background:#a8a8a8"></div><div class="a" style="left:665px;top:576px;width:19px;height:19px;background:#fff;border:1.5px solid #8a8a8a"></div><svg class="a" style="left:672px;top:581px" width="5" height="9" viewBox="0 0 5 9"><path d="M5 0V9L0 4.5z" fill="#222"/></svg><div class="a" style="left:683px;top:576px;width:346px;height:19px;background:#fff;border:1.5px solid #8a8a8a"></div><div class="a" style="left:1051px;top:576px;width:19px;height:19px;background:#fff;border:1.5px solid #8a8a8a"></div><svg class="a" style="left:1058px;top:581px" width="5" height="9" viewBox="0 0 5 9"><path d="M0 0V9L5 4.5z" fill="#222"/></svg><div class="a" style="left:0px;top:598px;width:1089px;height:25px;background:#f3f3f3;border-top:1px solid #d0d0d0"></div><div class="t" style="left:8.5px;top:605.8px;font-size:12px;color:#333;">Ready</div><svg class="a" style="left:63px;top:603px" width="16" height="16" viewBox="0 0 16 16"><circle cx="3.5" cy="3.5" r="3" fill="#555"/><rect x="6" y="1.5" width="9.5" height="3" fill="#555"/><rect x=".5" y="5.5" width="15" height="10" fill="#fff" stroke="#555" stroke-width="1.1"/><path d="M3 8.5h10M3 11h10M3 13.5h10" stroke="#888" stroke-width="1"/></svg><div class="t" style="left:669.0px;top:605.3px;font-size:12.2px;color:#333;">Count: 8</div><div class="a" style="left:735px;top:598px;width:46px;height:25px;background:#c8c8c8"></div><svg class="a" style="left:750px;top:603px" width="15" height="15" viewBox="0 0 15 15"><rect x=".5" y=".5" width="14" height="14" fill="none" stroke="#6a6a6a" stroke-width="1.1"/><path d="M.5 4.5h14M5.5 .5v14" stroke="#6a6a6a" stroke-width="1.1"/><path d="M.5 9h14" stroke="#9a9a9a" stroke-width=".8" stroke-dasharray="1.5 1"/></svg><svg class="a" style="left:797px;top:603px" width="15" height="15" viewBox="0 0 15 15"><path d="M.5 .5h14v14h-14" fill="none" stroke="#6a6a6a" stroke-width="1.1"/><path d="M3.5 2v11.5" stroke="#6a6a6a" stroke-width="1.1"/><path d="M6 5h4M6 8h4M6 11h4" stroke="#6a6a6a" stroke-width="1.1"/></svg><svg class="a" style="left:843px;top:603px" width="15" height="15" viewBox="0 0 15 15"><rect x=".5" y=".5" width="14" height="14" fill="none" stroke="#6a6a6a" stroke-width="1.1"/><path d="M.5 9.5h9v-9" fill="none" stroke="#6a6a6a" stroke-width="1.1"/><path d="M5 .5v9" stroke="#aaa" stroke-width=".8"/></svg><div class="a" style="left:880px;top:610px;width:9px;height:1.3px;background:#444"></div><div class="a" style="left:896px;top:610px;width:115px;height:1.5px;background:#555"></div><div class="a" style="left:950px;top:604px;width:6px;height:13px;background:#444"></div><div class="a" style="left:1017px;top:610px;width:9px;height:1.3px;background:#444"></div><div class="a" style="left:1021px;top:606px;width:1.3px;height:9px;background:#444"></div><div class="t" style="left:1041.0px;top:605.3px;font-size:12px;color:#333;">100%</div><div class="a" style="left:0px;top:622px;width:1089px;height:1.2px;background:#217346"></div><div class="a" style="left:0px;top:623px;width:1089px;height:5px;background:linear-gradient(90deg,#8a9bb2 0,#8a9bb2 90px,#2458c4 347px,#1c4bb5 520px,#1742a8 700px,#0b1d5e 790px,#0a1a55 960px,#3a5a90 1010px,#9aaabb 1040px,#a8b4c2 1089px)"></div><div class="a" style="left:89px;top:246.5px;width:259px;height:400px;background:#fff;border:1px solid #a6a6a6;border-radius:4px;box-shadow:2px 2px 8px rgba(0,0,0,.13)"></div><div class="a" style="left:96px;top:252.5px;width:245px;height:27px;background:#fff;border:1px solid #b5b5b5"></div><div class="t" style="left:103.5px;top:259.5px;font-size:12.3px;color:#7a7a7a;">Search the menus</div><div class="t" style="left:128.3px;top:293.2px;font-size:13.3px;color:#262626;">Cu<u>t</u></div><div class="t" style="left:128.3px;top:321.7px;font-size:13.3px;color:#262626;"><u>C</u>opy</div><div class="a" style="left:119px;top:340.5px;width:226px;height:26px;background:#e9e9e9"></div><div class="t" style="left:129.0px;top:347.3px;font-size:13.8px;color:#5a5a5a;font-weight:bold;letter-spacing:.05px">Paste Options:</div><div class="t" style="left:128.3px;top:410.1px;font-size:13.3px;color:#262626;">Paste <u>S</u>pecial...</div><div class="a" style="left:128px;top:430px;width:217px;height:1px;background:#dcdcdc"></div><div class="t" style="left:128.3px;top:440.1px;font-size:13.3px;color:#262626;"><u>I</u>nsert</div><div class="t" style="left:128.3px;top:467.6px;font-size:13.3px;color:#262626;">Delete</div><div class="t" style="left:128.3px;top:495.3px;font-size:13.3px;color:#262626;">Clear Co<u>n</u>tents</div><div class="a" style="left:128px;top:515px;width:217px;height:1px;background:#dcdcdc"></div><div class="t" style="left:128.3px;top:525.9px;font-size:13.3px;color:#262626;"><u>F</u>ormat Cells...</div><div class="t" style="left:128.3px;top:553.7px;font-size:13.3px;color:#262626;">Column <u>W</u>idth...</div><div class="a" style="left:91px;top:573px;width:255px;height:27px;background:#d1d1d1"></div><div class="t" style="left:128.3px;top:581.1px;font-size:13.3px;color:#262626;"><u>H</u>ide</div><div class="t" style="left:128.3px;top:608.5px;font-size:13.3px;color:#262626;">Unhide</div><svg class="a" style="left:97px;top:291px" width="16" height="17" viewBox="0 0 16 17"><path d="M3.5 1l6.5 9.5M12.5 1l-6.5 9.5" stroke="#6b6b6b" stroke-width="1.3"/><circle cx="4" cy="13" r="2.6" fill="none" stroke="#3f7fc4" stroke-width="1.3"/><circle cx="12" cy="13" r="2.6" fill="none" stroke="#3f7fc4" stroke-width="1.3"/></svg><svg class="a" style="left:97px;top:318px" width="17" height="18" viewBox="0 0 17 18"><path d="M.5 .5h6.5l2.5 2.5v9.5h-9z" fill="#fff" stroke="#777" stroke-width="1"/>
<path d="M2 3.5h4.5M2 5.5h4.5M2 7.5h4.5M2 9.5h4.5" stroke="#3f7fc4" stroke-width=".8"/>
<path d="M6.5 5.5h6.5l3.5 3.5v8.5h-10z" fill="#fff" stroke="#777" stroke-width="1"/>
<path d="M8.5 10.5h6M8.5 12.5h6M8.5 14.5h6M8.5 16.5h6" stroke="#3f7fc4" stroke-width=".8"/></svg><svg class="a" style="left:97px;top:344px" width="18" height="20" viewBox="0 0 18 20"><rect x="1" y="3" width="13" height="15" rx="1" fill="#eac17e"/>
<path d="M3.5 3.5h8v2h-8z" fill="#6f6f6f"/><path d="M6 3.5v-1.5a1.5 1.2 0 0 1 3 0v1.5z" fill="#6f6f6f"/>
<path d="M9 9.5h5l3 3v6.5h-8z" fill="#fff" stroke="#7d7d7d" stroke-width=".9"/></svg><svg class="a" style="left:126px;top:371px" width="26" height="28" viewBox="0 0 26 28"><rect x="1" y="4" width="20" height="22" rx="1.5" fill="#eac17e"/>
<path d="M5 5h12v3h-12z" fill="#6f6f6f"/><path d="M9 5v-2a2.2 1.8 0 0 1 4.4 0v2z" fill="#6f6f6f"/>
<path d="M12.5 13h7.5l4.5 4.5v10h-12z" fill="#fff" stroke="#7d7d7d" stroke-width=".9"/></svg><div class="a" style="left:167px;top:380px;width:9px;height:9px;background:#ff9a00;border-radius:50%"></div><svg class="a" style="left:98px;top:523px" width="16" height="16" viewBox="0 0 16 16"><rect x=".5" y=".5" width="15" height="15" fill="#fff" stroke="#8a8a8a"/><rect x=".5" y=".5" width="15" height="2" fill="#3f7fc4"/><path d="M3 6h1M3 9h1M3 12h1M6 6h7M6 9h7M6 12h7" stroke="#9a9a9a"/></svg><div class="a" style="left:105px;top:569px;width:75px;height:35px;border:7.3px solid #ea44b4"></div><div class="a" style="left:89.5px;top:164.5px;width:300px;height:63px;background:#fff;border:1px solid #a6a6a6;border-radius:6px;box-shadow:1px 2px 6px rgba(0,0,0,.15)"></div><div class="a" style="left:94px;top:168.5px;width:68px;height:27px;border:1px solid #8c8c8c;background:#fff"></div><div class="a" style="left:162px;top:168.5px;width:53px;height:27px;border:1px solid #8c8c8c;border-left:2px solid #8c8c8c;background:#fff"></div><div class="t" style="left:96.6px;top:176.8px;font-size:12.2px;color:#262626;">Calibri</div><svg class="a" style="left:149px;top:180.3px" width="8" height="4" viewBox="0 0 8 4"><path d="M0 0h8l-4.0 4z" fill="#222"/></svg><div class="t" style="left:166.0px;top:176.8px;font-size:12.2px;color:#262626;">11</div><svg class="a" style="left:201.8px;top:180.3px" width="8" height="4" viewBox="0 0 8 4"><path d="M0 0h8l-4.0 4z" fill="#222"/></svg><div class="t" style="left:222.5px;top:176.0px;font-size:14px;color:#5a5a5a;">A</div><svg class="a" style="left:231px;top:174px" width="4" height="2" viewBox="0 0 4 2"><path d="M0 2L2 0L4 2z" fill="#3f7fc4"/></svg><div class="t" style="left:249.5px;top:178.1px;font-size:11.5px;color:#5a5a5a;">A</div><svg class="a" style="left:254px;top:174px" width="5" height="2.5" viewBox="0 0 5 2.5"><path d="M0 0H5L2.5 2.5z" fill="#3f7fc4"/></svg><svg class="a" style="left:270px;top:173px" width="18" height="17" viewBox="0 0 18 17"><rect x=".8" y=".8" width="15" height="9" fill="#fff" stroke="#3f7fc4" stroke-width="1.6"/><circle cx="6" cy="5.3" r="2.4" fill="#3f7fc4"/><ellipse cx="12" cy="9.5" rx="4.2" ry="1.8" fill="#eac17e" stroke="#fff" stroke-width=".6"/><ellipse cx="12" cy="12" rx="4.2" ry="1.8" fill="#eac17e" stroke="#fff" stroke-width=".6"/><ellipse cx="6.5" cy="13" rx="4.2" ry="1.8" fill="#eac17e" stroke="#fff" stroke-width=".6"/><ellipse cx="6.5" cy="15.3" rx="4.2" ry="1.8" fill="#eac17e" stroke="#fff" stroke-width=".6"/></svg><svg class="a" style="left:295.5px;top:180px" width="8" height="5.3" viewBox="0 0 8 5.3"><path d="M1 1l3.0 3.3l3.0 -3.3" fill="none" stroke="#444" stroke-width="1.3"/></svg><div class="t" style="left:313.5px;top:174.7px;font-size:16.5px;color:#555;">%</div><svg class="a" style="left:343px;top:177.3px" width="8" height="10" viewBox="0 0 8 10"><path d="M4.2 0.3a3.3 3.3 0 0 1 3.3 3.5c0 2.8-2.3 5.2-5.5 6l-.6-1.1c1.8-.8 3-2 3.3-3.3a3.3 3.3 0 1 1-.5-5.1z" fill="#555"/></svg><svg class="a" style="left:364px;top:174px" width="17" height="16" viewBox="0 0 17 16"><rect x=".5" y=".5" width="16" height="15" fill="#fff" stroke="#8a8a8a"/><path d="M.5 4h16M.5 12h16M8.5 .5v3.5M8.5 12v3.5" stroke="#8a8a8a"/><path d="M3 8h11M5 6l-2 2l2 2M12 6l2 2l-2 2" fill="none" stroke="#3f7fc4" stroke-width="1"/></svg><div class="t" style="left:101.5px;top:201.3px;font-size:14.5px;color:#5a5a5a;font-weight:bold">B</div><div class="t" style="left:127.5px;top:200.0px;font-size:16px;color:#5a5a5a;font-family:Liberation Serif;font-style:italic;font-weight:bold">I</div><svg class="a" style="left:149px;top:203px" width="16" height="13" viewBox="0 0 16 13"><path d="M0 .6h15M2 4.3h11M0 8h15M2 11.6h11" stroke="#7b7b7b" stroke-width="1.1"/></svg><svg class="a" style="left:172px;top:199px" width="21" height="20" viewBox="0 0 21 20"><path d="M4 8l6-6l6 6l-6 6z" fill="#fff" stroke="#6b6b6b" stroke-width="1.1"/><path d="M10 2v-2" stroke="#6b6b6b" stroke-width="1.1"/><path d="M16 8c1.5 1.5 1.8 3.5 1 4.5" fill="none" stroke="#3f7fc4" stroke-width="1.6"/><rect x="1" y="15" width="19" height="5" fill="#ffff00"/></svg><svg class="a" style="left:199.5px;top:207.5px" width="8" height="5.3" viewBox="0 0 8 5.3"><path d="M1 1l3.0 3.3l3.0 -3.3" fill="none" stroke="#444" stroke-width="1.3"/></svg><div class="t" style="left:219.0px;top:200.2px;font-size:15px;color:#5a5a5a;-webkit-text-stroke:.4px #5a5a5a">A</div><div class="a" style="left:216px;top:214px;width:19px;height:5px;background:#ff0000"></div><svg class="a" style="left:242px;top:207.5px" width="8" height="5.3" viewBox="0 0 8 5.3"><path d="M1 1l3.0 3.3l3.0 -3.3" fill="none" stroke="#444" stroke-width="1.3"/></svg><svg class="a" style="left:259px;top:201px" width="18" height="17" viewBox="0 0 18 17"><path d="M.5 .5h17M.5 8.5h17" fill="none" stroke="#9a9a9a" stroke-dasharray="4 2"/><path d="M.5 16.5h17" stroke="#9a9a9a"/><path d="M.5 .5v16M17.5 .5v16" stroke="#dcdcdc" stroke-dasharray="2 2"/></svg><svg class="a" style="left:284.5px;top:207.5px" width="8" height="5.3" viewBox="0 0 8 5.3"><path d="M1 1l3.0 3.3l3.0 -3.3" fill="none" stroke="#444" stroke-width="1.3"/></svg><svg class="a" style="left:303px;top:202px" width="18" height="16" viewBox="0 0 18 16"><path d="M1 5h6M1 5l2.5-2.5M1 5l2.5 2.5" fill="none" stroke="#3f7fc4" stroke-width="1.6"/><text x="6.5" y="8" font-family="Liberation Sans" font-size="9.5" fill="#555">.0</text><text x="0" y="16" font-family="Liberation Sans" font-size="9.5" fill="#555">.00</text></svg><svg class="a" style="left:328px;top:202px" width="18" height="16" viewBox="0 0 18 16"><text x="2" y="8" font-family="Liberation Sans" font-size="9.5" fill="#555">.00</text><path d="M1 12.5h6M7 12.5l-2.5-2.5M7 12.5l-2.5 2.5" fill="none" stroke="#3f7fc4" stroke-width="1.6"/><text x="7.5" y="16" font-family="Liberation Sans" font-size="9.5" fill="#555">.0</text></svg><svg class="a" style="left:355px;top:203px" width="14" height="13" viewBox="0 0 14 13"><path d="M8.5 3.5l3.5-3l1.7 1.7l-3 3.5z" fill="#6f6f6f"/><path d="M7.5 3.5l2.8 2.8l-1 1l-2.8-2.8z" fill="#6f6f6f"/><path d="M6 4.7l3 3l-3.8 4.8l-5-5z" fill="#eac17e"/></svg><div class="a" style="left:22px;top:228px;width:85px;height:32px;border:7.5px solid #ea44b4"></div>
</body></html>
